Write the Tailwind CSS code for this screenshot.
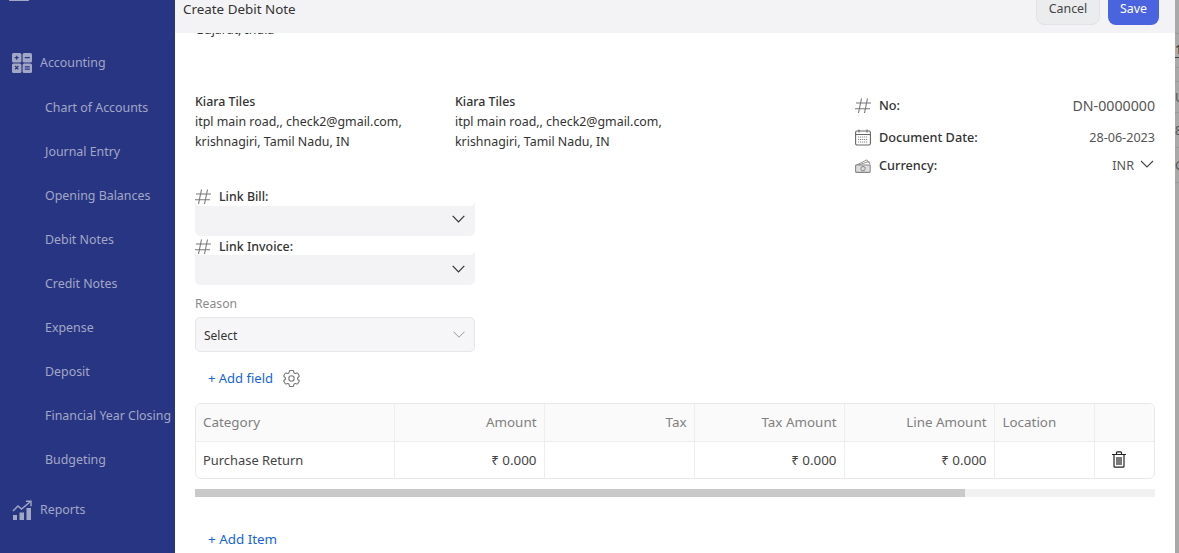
<!DOCTYPE html>
<html lang="en">
<head>
  <meta charset="UTF-8" />
  <title>Create Debit Note</title>
  <script src="https://cdn.jsdelivr.net/npm/@tailwindcss/browser@4"></script>
</head>
<body class="h-[553px] w-[1179px] overflow-hidden bg-white font-['Noto_Sans',sans-serif] text-[12.4px] text-[#333]">
  <div class="flex h-[553px]">

    <!-- Sidebar -->
    <aside class="relative flex h-full w-[175px] shrink-0 flex-col overflow-hidden bg-[#283583] text-[#a3a7c6]">
      <div class="absolute left-[9px] top-0 h-[1px] w-[20px] rounded bg-[#a3a7c6]"></div>
      <div class="mt-[53px] flex h-[22px] items-center pl-[12px]">
        <svg width="20" height="20" viewBox="0 0 20 20" class="mr-[8px]">
          <rect x="0" y="0" width="9.4" height="9.4" rx="1.5" fill="#a3a7c6"/>
          <rect x="10.6" y="0" width="9.4" height="9.4" rx="1.5" fill="#a3a7c6"/>
          <rect x="0" y="10.6" width="9.4" height="9.4" rx="1.5" fill="#a3a7c6"/>
          <rect x="10.6" y="10.6" width="9.4" height="9.4" rx="1.5" fill="#a3a7c6"/>
          <path d="M2.7 4.7h4M4.7 2.7v4M12.8 4.7h5M3 13l3.4 3.4M6.4 13L3 16.4M12.8 13.8h5M12.8 16.2h5" stroke="#283583" stroke-width="1.2" fill="none"/>
        </svg>
        <span>Accounting</span>
      </div>
      <nav class="mt-[13px] flex flex-col pl-[45px]">
        <a class="flex h-[44px] items-center whitespace-nowrap">Chart of Accounts</a>
        <a class="flex h-[44px] items-center whitespace-nowrap">Journal Entry</a>
        <a class="flex h-[44px] items-center whitespace-nowrap">Opening Balances</a>
        <a class="flex h-[44px] items-center whitespace-nowrap">Debit Notes</a>
        <a class="flex h-[44px] items-center whitespace-nowrap">Credit Notes</a>
        <a class="flex h-[44px] items-center whitespace-nowrap">Expense</a>
        <a class="flex h-[44px] items-center whitespace-nowrap">Deposit</a>
        <a class="flex h-[44px] items-center whitespace-nowrap">Financial Year Closing</a>
        <a class="flex h-[44px] items-center whitespace-nowrap">Budgeting</a>
      </nav>
      <div class="mt-[18px] flex h-[22px] items-center pl-[12px]">
        <svg width="20" height="20" viewBox="0 0 20 20" class="mr-[8px]">
          <path d="M1 11l5-5 3.5 3L18 2" stroke="#a3a7c6" stroke-width="1.4" fill="none"/>
          <path d="M14 1.3h5v5" stroke="#a3a7c6" stroke-width="1.4" fill="none"/>
          <rect x="1" y="15" width="4" height="5" fill="#a3a7c6"/>
          <rect x="7.5" y="12.5" width="4.5" height="7.5" fill="#a3a7c6"/>
          <rect x="14.5" y="8" width="4.5" height="12" fill="#a3a7c6"/>
        </svg>
        <span>Reports</span>
      </div>
      <div class="mt-[33px] ml-[13px] h-[6px] w-[18px] shrink-0 bg-[#a3a7c6]"></div>
    </aside>

    <!-- Main panel -->
    <main class="relative flex h-full w-[1000px] shrink-0 flex-col overflow-hidden bg-white">
      <header class="z-10 flex h-[33px] shrink-0 items-start justify-between bg-[#f3f3f5] pl-[8px] pr-[16px]">
        <h1 class="mt-[-1px] text-[13.4px] leading-[20px] text-[#333]">Create Debit Note</h1>
        <div class="mt-[-8px] flex gap-[8px]">
          <button class="h-[33px] w-[64px] rounded-[8px] border border-[#e2e3e6] bg-[#ebecee] pt-[2px] text-[#444]">Cancel</button>
          <button class="h-[33px] w-[51px] rounded-[8px] bg-[#4a64e0] pt-[2px] text-white">Save</button>
        </div>
      </header>

      <div class="flex flex-col px-[20px]">
        <p class="mt-[-12px] h-[18px] leading-[18px]">Gujarat, India</p>

        <!-- Addresses and document meta -->
        <section class="mt-[53px] flex justify-between">
          <div class="flex">
            <div class="w-[260px] leading-[20px]">
              <p class="font-medium">Kiara Tiles</p>
              <p>itpl main road,, check2@gmail.com,</p>
              <p>krishnagiri, Tamil Nadu, IN</p>
            </div>
            <div class="leading-[20px]">
              <p class="font-medium">Kiara Tiles</p>
              <p>itpl main road,, check2@gmail.com,</p>
              <p>krishnagiri, Tamil Nadu, IN</p>
            </div>
          </div>
          <div class="mt-[-2px] flex w-[300px] flex-col">
            <div class="flex h-[32px] items-center justify-between">
              <div class="flex items-center">
                <svg width="16" height="16" viewBox="0 0 16 16" class="mr-[8px]"><path d="M6.5 .5L3.5 15M12.5 .5L9.5 15M1 5h15M0 10.7h15" stroke="#777" stroke-width="1.1" fill="none"/></svg>
                <span class="text-[12.7px] font-medium">No:</span>
              </div>
              <span class="text-[14.2px] text-[#555]">DN-0000000</span>
            </div>
            <div class="flex h-[32px] items-center justify-between">
              <div class="flex items-center">
                <svg width="16" height="17" viewBox="0 0 16 17" class="mr-[8px]">
                  <rect x=".6" y="2" width="14.8" height="14" rx="1.5" stroke="#666" stroke-width="1.1" fill="none"/>
                  <path d="M.6 5.5h14.8M4 .5v3M12 .5v3" stroke="#666" stroke-width="1.1" fill="none"/>
                  <path d="M3 8h10M3 10.5h10M3 13h10" stroke="#888" stroke-width="1.2" stroke-dasharray="1.2 .8" fill="none"/>
                </svg>
                <span class="text-[12.7px] font-medium">Document Date:</span>
              </div>
              <span class="text-[12.6px] text-[#555]">28-06-2023</span>
            </div>
            <div class="flex h-[24px] items-center justify-between">
              <div class="flex items-center">
                <svg width="16" height="14" viewBox="0 0 16 14" class="mr-[8px]">
                  <path d="M.6 6.5L12 .8l1.5 3" stroke="#999" stroke-width="1" fill="none"/>
                  <path d="M3 6L14 2.5l1 3" stroke="#999" stroke-width="1" fill="none"/>
                  <rect x=".6" y="6" width="14.6" height="7.4" rx=".8" stroke="#888" stroke-width="1.1" fill="#ddd"/>
                  <circle cx="8" cy="9.7" r="2.2" stroke="#888" stroke-width="1" fill="none"/>
                </svg>
                <span class="text-[12.7px] font-medium">Currency:</span>
              </div>
              <div class="flex items-center gap-[6px] text-[12.6px] text-[#555]">
                <span>INR</span>
                <svg width="14" height="8" viewBox="0 0 14 8" class="mt-[-4px] mr-[1px]"><path d="M1 1l6 6 6-6" stroke="#444" stroke-width="1.1" fill="none"/></svg>
              </div>
            </div>
          </div>
        </section>

        <!-- Link fields -->
        <section class="mt-[6px] flex w-[280px] flex-col">
          <div class="rounded-[5px] bg-[#f3f3f5]">
            <div class="flex h-[22px] items-center rounded-b-[5px] bg-white pt-[4px]">
              <svg width="16" height="16" viewBox="0 0 16 16" class="mr-[8px]"><path d="M6.5 .5L3.5 15M12.5 .5L9.5 15M1 5h15M0 10.7h15" stroke="#777" stroke-width="1.1" fill="none"/></svg>
              <span class="font-medium leading-[18px]">Link Bill:</span>
            </div>
            <div class="flex h-[30px] items-center justify-end pr-[10px] pb-[4px]">
              <svg width="13" height="8" viewBox="0 0 13 8"><path d="M.7 .8l5.8 6 5.8-6" stroke="#333" stroke-width="1.2" fill="none"/></svg>
            </div>
          </div>
          <div class="rounded-[5px] bg-[#f3f3f5]">
            <div class="flex h-[19px] items-center rounded-b-[5px] bg-white pt-[2px]">
              <svg width="16" height="16" viewBox="0 0 16 16" class="mr-[8px]"><path d="M6.5 .5L3.5 15M12.5 .5L9.5 15M1 5h15M0 10.7h15" stroke="#777" stroke-width="1.1" fill="none"/></svg>
              <span class="font-medium leading-[18px]">Link Invoice:</span>
            </div>
            <div class="flex h-[30px] items-center justify-end pr-[10px] pb-[3px]">
              <svg width="13" height="8" viewBox="0 0 13 8"><path d="M.7 .8l5.8 6 5.8-6" stroke="#333" stroke-width="1.2" fill="none"/></svg>
            </div>
          </div>
          <label class="mt-[10px] h-[18px] text-[12.2px] leading-[18px] text-[#8a8a8a]">Reason</label>
          <div class="mt-[4px] flex h-[35px] items-center justify-between rounded-[5px] border border-[#e6e6e8] bg-[#f6f6f8] pl-[8px] pr-[9px] text-[12px]">
            <span class="pt-[2px]">Select</span>
            <svg width="12" height="7" viewBox="0 0 12 7"><path d="M.5 .7L6 6.2 11.5 .7" stroke="#999" stroke-width="1" fill="none"/></svg>
          </div>
        </section>

        <div class="mt-[16px] flex h-[22px] items-center pl-[13px] text-[13px] text-[#1565d8]">
          <span>+ Add field</span>
          <svg width="17" height="17" viewBox="2.5 2.5 19 19" class="ml-[10px] mt-[-2px]" fill="none" stroke="#777" stroke-width="1.2">
            <path d="M9.594 3.94c.09-.542.56-.94 1.11-.94h2.593c.55 0 1.02.398 1.11.94l.213 1.281c.063.374.313.686.645.87.074.04.147.083.22.127.324.196.72.257 1.075.124l1.217-.456a1.125 1.125 0 011.37.49l1.296 2.247a1.125 1.125 0 01-.26 1.431l-1.003.827c-.293.24-.438.613-.431.992a6.759 6.759 0 010 .255c-.007.378.138.75.43.99l1.005.828c.424.35.534.954.26 1.43l-1.298 2.247a1.125 1.125 0 01-1.369.491l-1.217-.456c-.355-.133-.75-.072-1.076.124a6.57 6.57 0 01-.22.128c-.331.183-.581.495-.644.869l-.213 1.28c-.09.543-.56.941-1.11.941h-2.594c-.55 0-1.02-.398-1.11-.94l-.213-1.281c-.062-.374-.312-.686-.644-.87a6.52 6.52 0 01-.22-.127c-.325-.196-.72-.257-1.076-.124l-1.217.456a1.125 1.125 0 01-1.369-.49l-1.297-2.247a1.125 1.125 0 01.26-1.431l1.004-.827c.292-.24.437-.613.43-.992a6.932 6.932 0 010-.255c.007-.378-.138-.75-.43-.99l-1.004-.828a1.125 1.125 0 01-.26-1.43l1.297-2.247a1.125 1.125 0 011.37-.491l1.216.456c.356.133.751.072 1.076-.124.072-.044.146-.087.22-.128.332-.183.582-.495.644-.869l.214-1.281z"/>
            <circle cx="12" cy="12" r="3"/>
          </svg>
        </div>

        <!-- Line items -->
        <div class="mt-[13px] w-[960px] overflow-hidden rounded-[6px] border border-[#e8e8e8]">
          <table class="w-full table-fixed border-collapse text-[13.4px]">
            <thead>
              <tr class="h-[37px] border-b border-[#eeeeee] bg-[#fafafa] text-[#808080]">
                <th class="w-[198px] border-r border-[#eeeeee] pl-[7px] text-left font-normal">Category</th>
                <th class="w-[150px] border-r border-[#eeeeee] pr-[7px] text-right font-normal">Amount</th>
                <th class="w-[150px] border-r border-[#eeeeee] pr-[7px] text-right font-normal">Tax</th>
                <th class="w-[150px] border-r border-[#eeeeee] pr-[7px] text-right font-normal">Tax Amount</th>
                <th class="w-[150px] border-r border-[#eeeeee] pr-[7px] text-right font-normal">Line Amount</th>
                <th class="w-[100px] border-r border-[#eeeeee] pl-[8px] text-left font-normal">Location</th>
                <th class="font-normal"></th>
              </tr>
            </thead>
            <tbody>
              <tr class="h-[37px] text-[#444]">
                <td class="border-r border-[#eeeeee] pl-[7px] pt-[2px] text-[12.9px]">Purchase Return</td>
                <td class="border-r border-[#eeeeee] pr-[7px] text-right">₹ 0.000</td>
                <td class="border-r border-[#eeeeee]"></td>
                <td class="border-r border-[#eeeeee] pr-[7px] text-right">₹ 0.000</td>
                <td class="border-r border-[#eeeeee] pr-[7px] text-right">₹ 0.000</td>
                <td class="border-r border-[#eeeeee]"></td>
                <td class="pr-[11px] pb-[4px] text-center">
                  <svg width="14" height="17" viewBox="0 0 14 17" class="inline-block" fill="none" stroke="#222" stroke-width="1.2">
                    <path d="M0 3.5h14M4.5 3.5V1.7Q4.5 .8 5.3 .8h3.4q.8 0 .8 .9v1.8"/>
                    <path d="M2 3.5v11.7q0 1 1 1h8q1 0 1-1V3.5"/>
                    <path d="M5 6v8M7 6v8M9 6v8"/>
                  </svg>
                </td>
              </tr>
            </tbody>
          </table>
        </div>

        <!-- Horizontal scrollbar -->
        <div class="mt-[10px] h-[8px] w-[960px] bg-[#f1f1f1]">
          <div class="h-full w-[770px] bg-[#c9c9c9]"></div>
        </div>

        <div class="mt-[32px] pl-[13px] text-[13.4px] text-[#1565d8]">+ Add Item</div>
      </div>
    </main>

    <!-- Page behind the panel, dimmed -->
    <div class="flex h-full w-[4px] shrink-0 flex-col overflow-hidden bg-[#a9a9a9] text-[13px] leading-[16px] text-[#555]">
      <div class="h-[34px] shrink-0 border-b border-[#999]"></div>
      <div class="flex h-[24px] shrink-0 items-end overflow-hidden border-b border-[#444] font-medium text-[#333]">1</div>
      <div class="h-[10px] shrink-0 border-b border-[#999]"></div>
      <div class="h-[14px] shrink-0 border-b border-[#999]"></div>
      <div class="flex h-[31px] shrink-0 items-center overflow-hidden border-b border-[#999]">U</div>
      <div class="flex h-[35px] shrink-0 items-center overflow-hidden border-b border-[#999]">8</div>
      <div class="flex h-[35px] shrink-0 items-center overflow-hidden border-b border-[#999]">C</div>
    </div>
  </div>
</body>
</html>
